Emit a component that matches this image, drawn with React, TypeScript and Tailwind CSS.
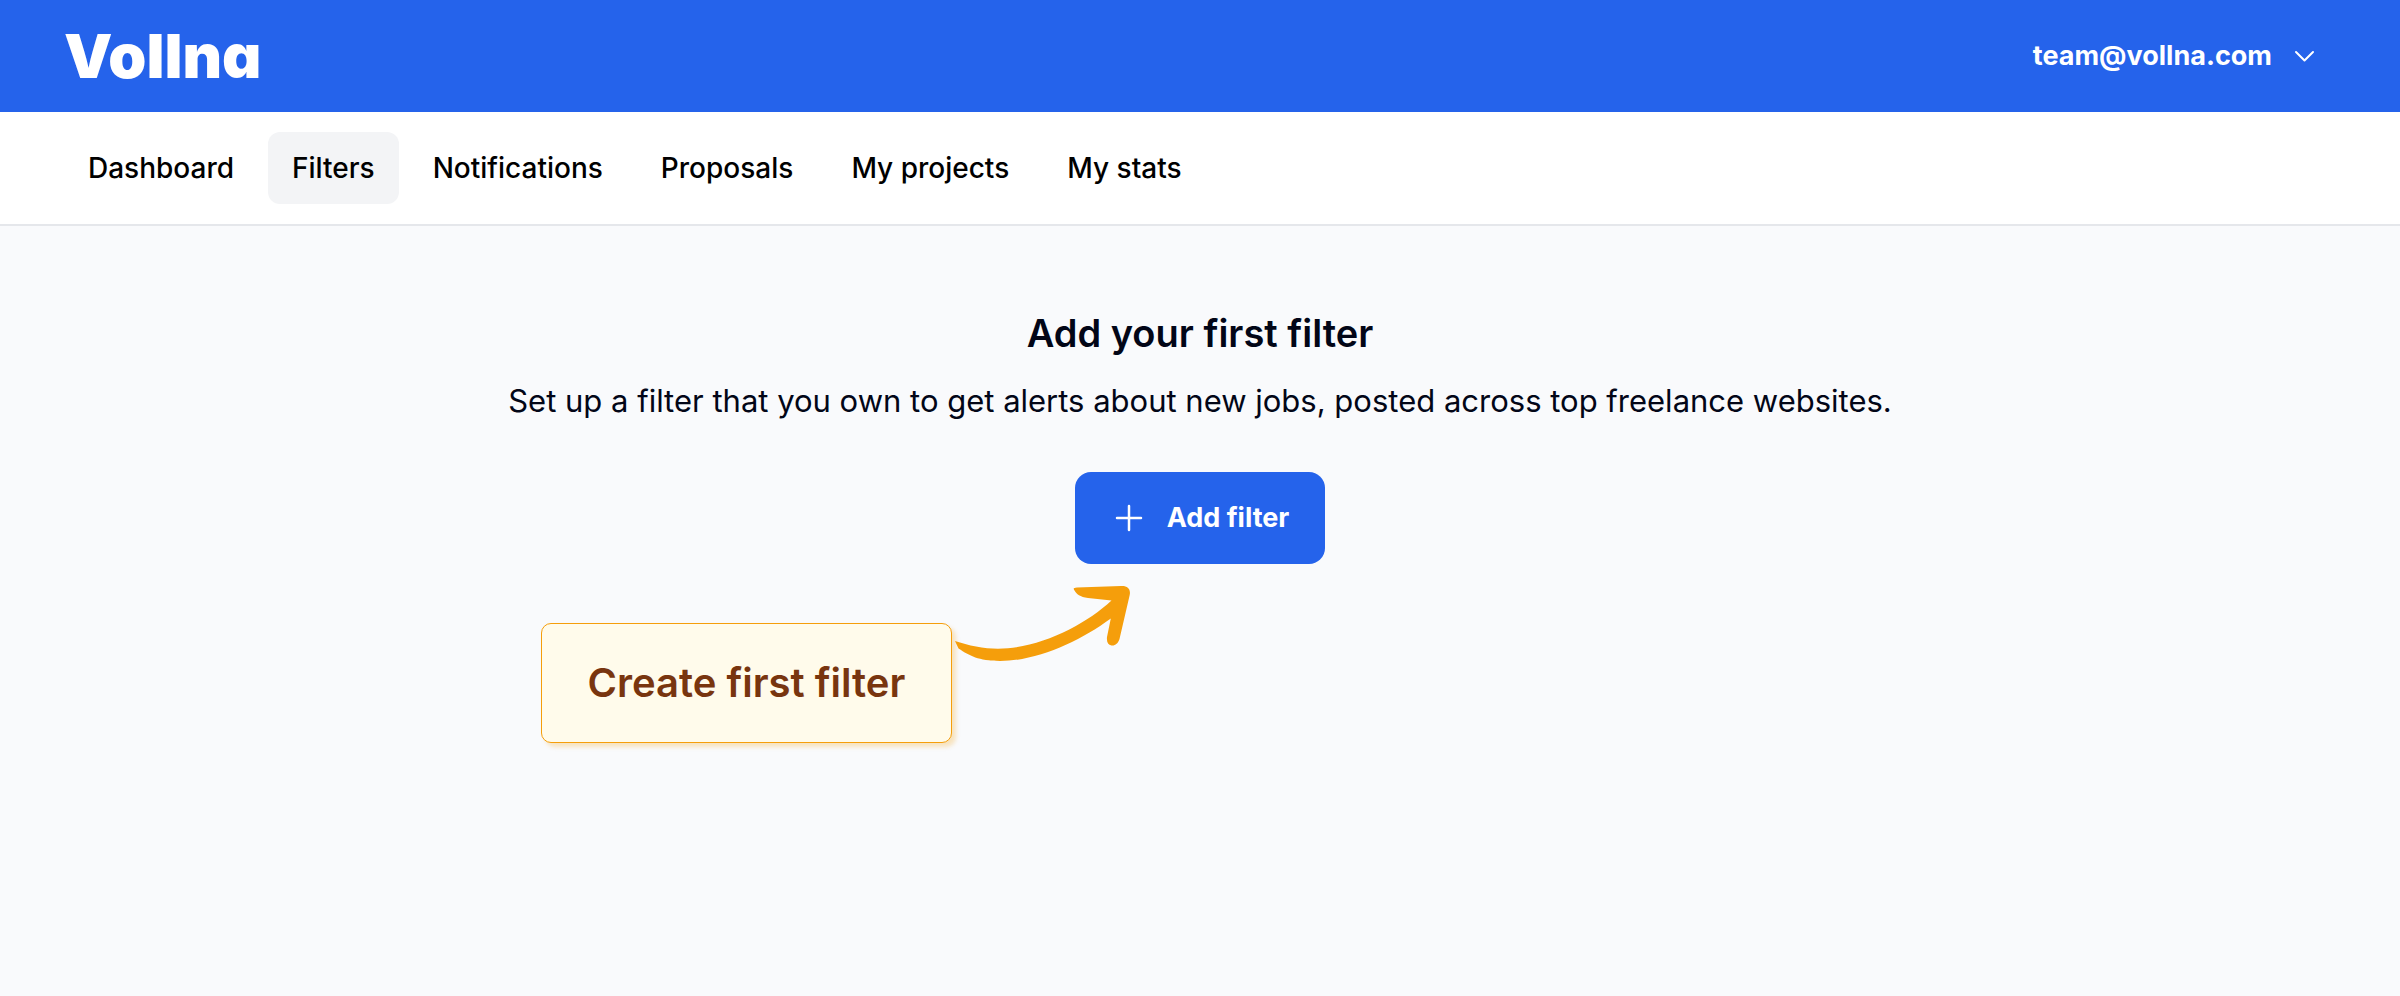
const links = ["Dashboard", "Filters", "Notifications", "Proposals", "My projects", "My stats"];

function Header() {
  return (
    <header className="flex h-28 items-center justify-between bg-[#2563eb] px-16 text-white">
      <a
        href="#home"
        className="text-[61px] leading-[72px] font-black [font-feature-settings:'cv11']"
      >
        Vollna
      </a>
      <button type="button" className="flex items-center gap-[18px] pr-[18px] text-[27px] leading-10 font-bold">
        team@vollna.com
        <svg
          className="size-7"
          viewBox="0 0 28 28"
          fill="none"
          stroke="currentColor"
          strokeWidth="2"
          strokeLinecap="round"
          strokeLinejoin="round"
          aria-hidden="true"
        >
          <path d="M6 10l8.500 8.500 8.500-8.500" />
        </svg>
      </button>
    </header>
  );
}

function Nav() {
  return (
    <nav className="flex gap-[10px] border-b-2 border-[#e5e7eb] bg-white px-16 py-5">
      {links.map((label) => (
        <a
          key={label}
          href={"#" + label.toLowerCase().replace(" ", "-")}
          aria-current={label === "Filters" ? "page" : undefined}
          className={
            "rounded-xl px-6 py-4 text-[28px] leading-10 font-medium text-black " +
            (label === "Filters" ? "bg-[#f3f4f6]" : "")
          }
        >
          {label}
        </a>
      ))}
    </nav>
  );
}

function Hint() {
  return (
    <div className="absolute top-[112px] right-[195px] flex items-start">
      <div className="mt-[39px] rounded-[10px] border border-[#f59e0b] bg-[#fffbeb] px-[46px] py-8 text-[40px] leading-[54px] font-semibold whitespace-nowrap text-[#78350f] shadow-[4px_4px_4px_rgba(245,158,11,0.25)]">
        Create first filter
      </div>
      <svg className="h-[80px] w-[178px] shrink-0" viewBox="952 584 178 80" fill="#f59e0b" aria-hidden="true">
        <path d="M955 641C968 645.500 984 648.700 998 648.700C1040 648.500 1085 625 1111.500 600.500L1088 598C1080 597 1076.500 594 1074.500 590.500C1073 588 1073.500 588 1077 587.500L1121 586C1127 585.500 1131 588.500 1129.700 595L1119.500 639C1118 643.500 1115 646 1111.500 645.500C1108 645 1106.500 642 1107 637L1110.800 618.500C1080 641 1038 661 1000 661C978 660.500 970 656 958.500 648.500Z" />
      </svg>
    </div>
  );
}

export default function App() {
  return (
    <div className="min-h-screen bg-[#f9fafc] font-['Inter','Liberation_Sans',sans-serif]">
      <Header />
      <Nav />
      <main className="flex flex-col items-center px-16 pt-20 text-center text-[#020617]">
        <h1 className="text-[38px] leading-[54px] font-semibold">Add your first filter</h1>
        <p className="mt-4 text-[31px] leading-[50px]">
          Set up a filter that you own to get alerts about new jobs, posted across top freelance websites.
        </p>
        <div className="relative mt-[46px]">
          <button
            type="button"
            className="flex items-center gap-[22px] rounded-2xl bg-[#2563eb] py-[26px] pr-9 pl-[38px] text-[27px] leading-10 font-bold text-white"
          >
            <svg
              className="size-8"
              viewBox="0 0 32 32"
              fill="none"
              stroke="currentColor"
              strokeWidth="2.500"
              strokeLinecap="round"
              aria-hidden="true"
            >
              <path d="M16 4v24M4 16h24" />
            </svg>
            Add filter
          </button>
          <Hint />
        </div>
      </main>
    </div>
  );
}
